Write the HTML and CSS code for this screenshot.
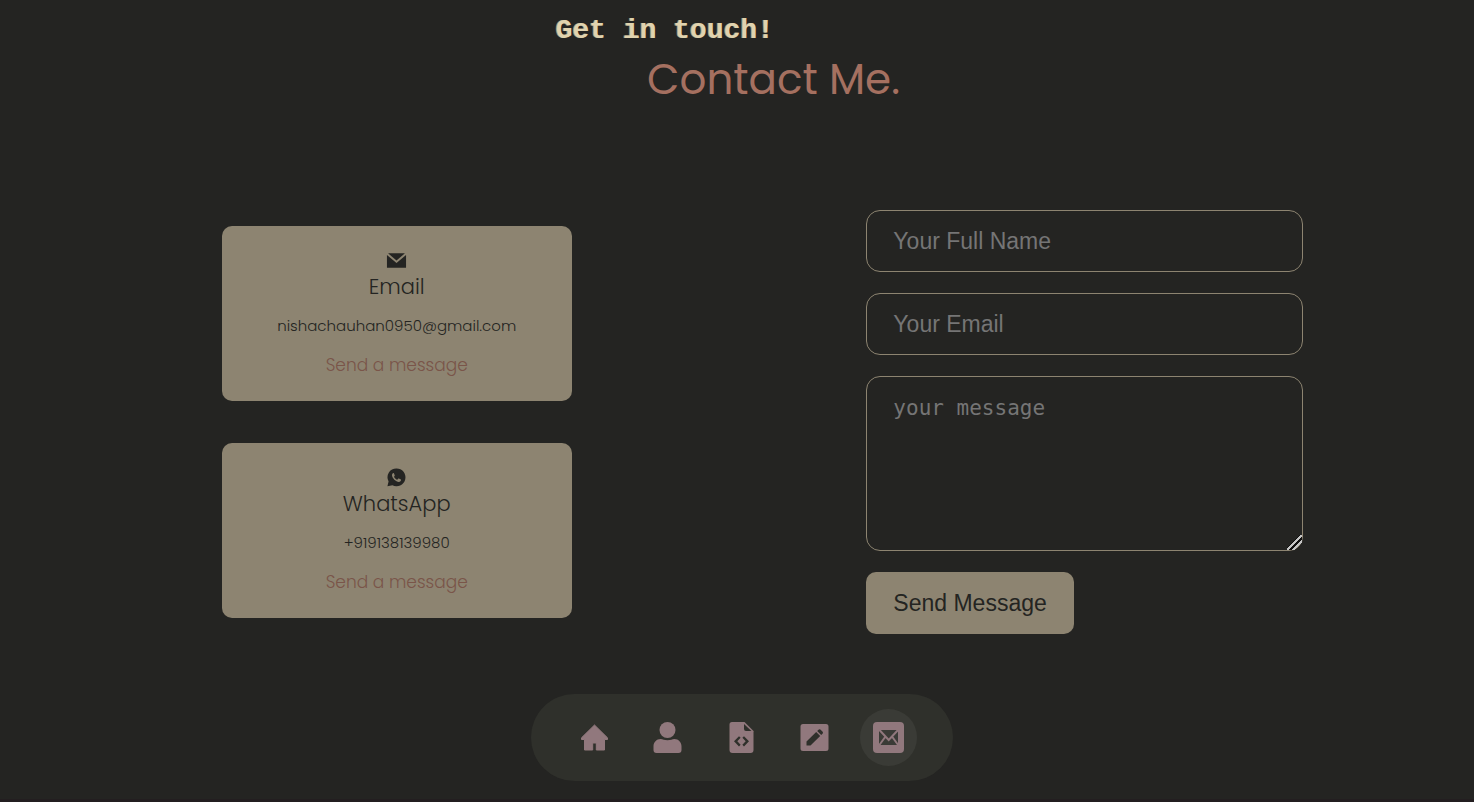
FILE: index.html
```html
<!DOCTYPE html>
<html lang="en">
<head>
<meta charset="utf-8">
<meta name="viewport" content="width=device-width, initial-scale=1">
<title>Contact Me</title>
<link rel="stylesheet" href="styles.css">
</head>
<body>
<main class="contact" id="contact">
  <header class="heading">
    <p class="heading-kicker">Get in touch!</p>
    <h1 class="heading-title">Contact Me.</h1>
  </header>
  <div class="contact-grid">
    <div class="options">
      <article class="option">
        <svg class="option-icon" viewBox="0 0 22 22" aria-hidden="true"><path d="M2.200 3.500h17.600L11 11z"/><path d="M1 5.200V18.500h20V5.200l-10 8.300z"/></svg>
        <h2 class="option-title">Email</h2>
        <p class="option-detail">nishachauhan0950@gmail.com</p>
        <a class="option-link" href="mailto:nishachauhan0950@gmail.com">Send a message</a>
      </article>
      <article class="option">
        <svg class="option-icon" viewBox="0 0 22 22" aria-hidden="true"><path fill-rule="evenodd" d="M11 1.500a9.300 9.300 0 1 1-4.300 17.500L1.500 20.200l1.200-4.900A9.300 9.300 0 0 1 11 1.500zM8 6.300c-.6-.1-1.700.8-1.700 2.300 0 2.900 4.200 7 7.100 7 1.500 0 2.300-1 2.300-2 0-.4-.2-.5-.5-.7l-1.700-.8c-.4-.2-.6 0-.8.300l-.6.800c-.2.200-.4.200-.7.100-1.300-.6-2.300-1.500-3-2.800-.1-.3 0-.4.200-.6l.5-.7c.1-.2.100-.4 0-.6l-.7-1.900c-.1-.3-.2-.4-.4-.4z"/></svg>
        <h2 class="option-title">WhatsApp</h2>
        <p class="option-detail">+919138139980</p>
        <a class="option-link" href="tel:+919138139980">Send a message</a>
      </article>
    </div>
    <form class="form">
      <input class="field" type="text" name="name" placeholder="Your Full Name" aria-label="Your Full Name" required>
      <input class="field" type="email" name="email" placeholder="Your Email" aria-label="Your Email" required>
      <textarea class="field field-message" name="message" placeholder="your message" aria-label="your message" required></textarea>
      <button class="submit" type="submit">Send Message</button>
    </form>
  </div>
</main>
<nav class="dock" aria-label="Sections">
  <a class="dock-link" href="#home" aria-label="Home"><svg class="dock-icon" viewBox="0.5 0.5 31 31"><path stroke="currentColor" stroke-width="1" stroke-linejoin="round" d="M16 3.500 29 16.300v1.700h-3v10.500h-8.200v-7h-3.600v7H6V18H3v-1.700z"/></svg></a>
  <a class="dock-link" href="#about" aria-label="About"><svg class="dock-icon" viewBox="0.5 0.5 31 31"><circle cx="16" cy="8.500" r="8"/><path d="M9 17.500c2.500 0 3.600 1.300 7 1.300s4.500-1.300 7-1.300c4 0 7 3.300 7 7.300v3.700c0 2-1 3-3 3H5c-2 0-3-1-3-3v-3.700c0-4 3-7.300 7-7.300z"/></svg></a>
  <a class="dock-link" href="#projects" aria-label="Projects"><svg class="dock-icon" viewBox="0.5 0.5 31 31"><path fill-rule="evenodd" d="M6.500.500H18.500v7a2 2 0 0 0 2 2H28v19a3 3 0 0 1-3 3H7a3 3 0 0 1-3-3V3a2.500 2.500 0 0 1 2.500-2.500zM13.500 14.700l-5 5.100 5 5.100 1.600-1.600-3.300-3.500 3.300-3.500zm5 0-1.600 1.600 3.300 3.500-3.300 3.500 1.600 1.600 5-5.100z"/><path d="M18.500.500H19L28 9.500V10h-1.500L18.500 2.500z"/></svg></a>
  <a class="dock-link" href="#blog" aria-label="Blog"><svg class="dock-icon" viewBox="0.5 0.5 31 31"><path fill-rule="evenodd" d="M4.500 2.500h23a2.500 2.500 0 0 1 2.500 2.500v22a2.500 2.500 0 0 1-2.500 2.500h-23A2.500 2.500 0 0 1 2 27V5a2.500 2.500 0 0 1 2.500-2.500zM8 20v4h4L21.700 14.500l-4-4zM18.700 9.600l4 4 1-1c1-1 1-1.900.2-2.700L22.400 8.400c-.8-.8-1.800-.8-2.700.2z"/></svg></a>
  <a class="dock-link dock-link-active" href="#contact" aria-label="Contact" aria-current="page"><svg class="dock-icon" viewBox="0.5 0.5 31 31"><rect x=".5" y=".5" width="31" height="31" rx="4"/><g class="dock-envelope"><rect x="6" y="8" width="20" height="16"/><path d="M6.500 8l9.700 10.500L26 8M6.500 24l6.500-9M26 24l-6.500-9"/></g></svg></a>
</nav>
</body>
</html>
```
FILE: styles.css
```css
* {
  box-sizing: border-box;
  margin: 0;
  padding: 0;
}

body {
  min-height: 100vh;
  background: #242422;
  border-bottom: 3px solid #231e20;
  color: #242422;
  font-family: Poppins, Inter, "Open Sans", sans-serif;
  font-weight: 300;
}

a {
  text-decoration: none;
}

.heading {
  padding-top: 13px;
}

.heading-kicker {
  margin-left: 37.7%;
  color: #e0d3af;
  font: bold 28px/36px "Courier New", "Liberation Mono", monospace;
  text-shadow: -1px 0 #a09678;
}

.heading-title {
  margin-left: 43.9%;
  color: #a57060;
  font-size: 42px;
  font-weight: 400;
  line-height: 62px;
}

.contact-grid {
  display: grid;
  grid-template-columns: 350fr 437fr;
  column-gap: 20vw;
  align-items: start;
  margin: 99px 11.6% 0 15.05%;
}

.options {
  display: grid;
  gap: 42px;
  padding-top: 16px;
}

.option {
  display: flex;
  flex-direction: column;
  align-items: center;
  padding: 24px 20px 22px;
  border-radius: 10px;
  background: #8d8471;
  text-align: center;
}

.option-icon {
  width: 21px;
  height: 21px;
  margin-bottom: 1px;
  fill: #242422;
}

.option-title {
  margin-bottom: 12px;
  font-size: 21px;
  font-weight: 300;
  line-height: 30px;
}

.option-detail {
  margin-bottom: 14px;
  font-size: 15px;
  line-height: 24px;
}

.option-link {
  color: #7a5549;
  font-size: 17px;
  line-height: 27px;
}

.form {
  display: flex;
  flex-direction: column;
  align-items: flex-start;
  gap: 21px;
}

.field {
  width: 100%;
  padding: 16px 26px;
  border: 1px solid #8d8471;
  border-radius: 14px;
  outline: none;
  background: transparent;
  color: #e0d3af;
  font: 23px/28px "Liberation Sans", Arial, sans-serif;
}

.field::placeholder {
  color: #757575;
}

.field-message {
  height: 175px;
  font: 21px/30px "DejaVu Sans Mono", monospace;
  resize: vertical;
}

.field-message::-webkit-resizer {
  background: linear-gradient(135deg, transparent 42%, #111 42% 46%, #c4c4c4 46% 55%, #111 55% 66%, #c4c4c4 66% 76%, transparent 76%);
}

.submit {
  padding: 17px 27px;
  border: 0;
  border-radius: 10px;
  background: #8d8471;
  color: #242422;
  font: 23px/28px "Liberation Sans", Arial, sans-serif;
  cursor: pointer;
}

.dock {
  position: fixed;
  bottom: 21px;
  left: 36%;
  display: flex;
  justify-content: space-between;
  width: 422px;
  padding: 15px 36px 15px 35px;
  border-radius: 44px;
  background: #2f302b;
}

.dock-link {
  display: grid;
  place-items: center;
  width: 57px;
  height: 57px;
  border-radius: 50%;
  color: #91787d;
}

.dock-link-active {
  background: #3a3b36;
}

.dock-icon {
  width: 31px;
  height: 31px;
  fill: currentColor;
}

.dock-envelope {
  fill: #3a3b36;
  stroke: #91787d;
  stroke-width: 1;
}

.dock-envelope path {
  fill: none;
  stroke-width: 2;
}
```
